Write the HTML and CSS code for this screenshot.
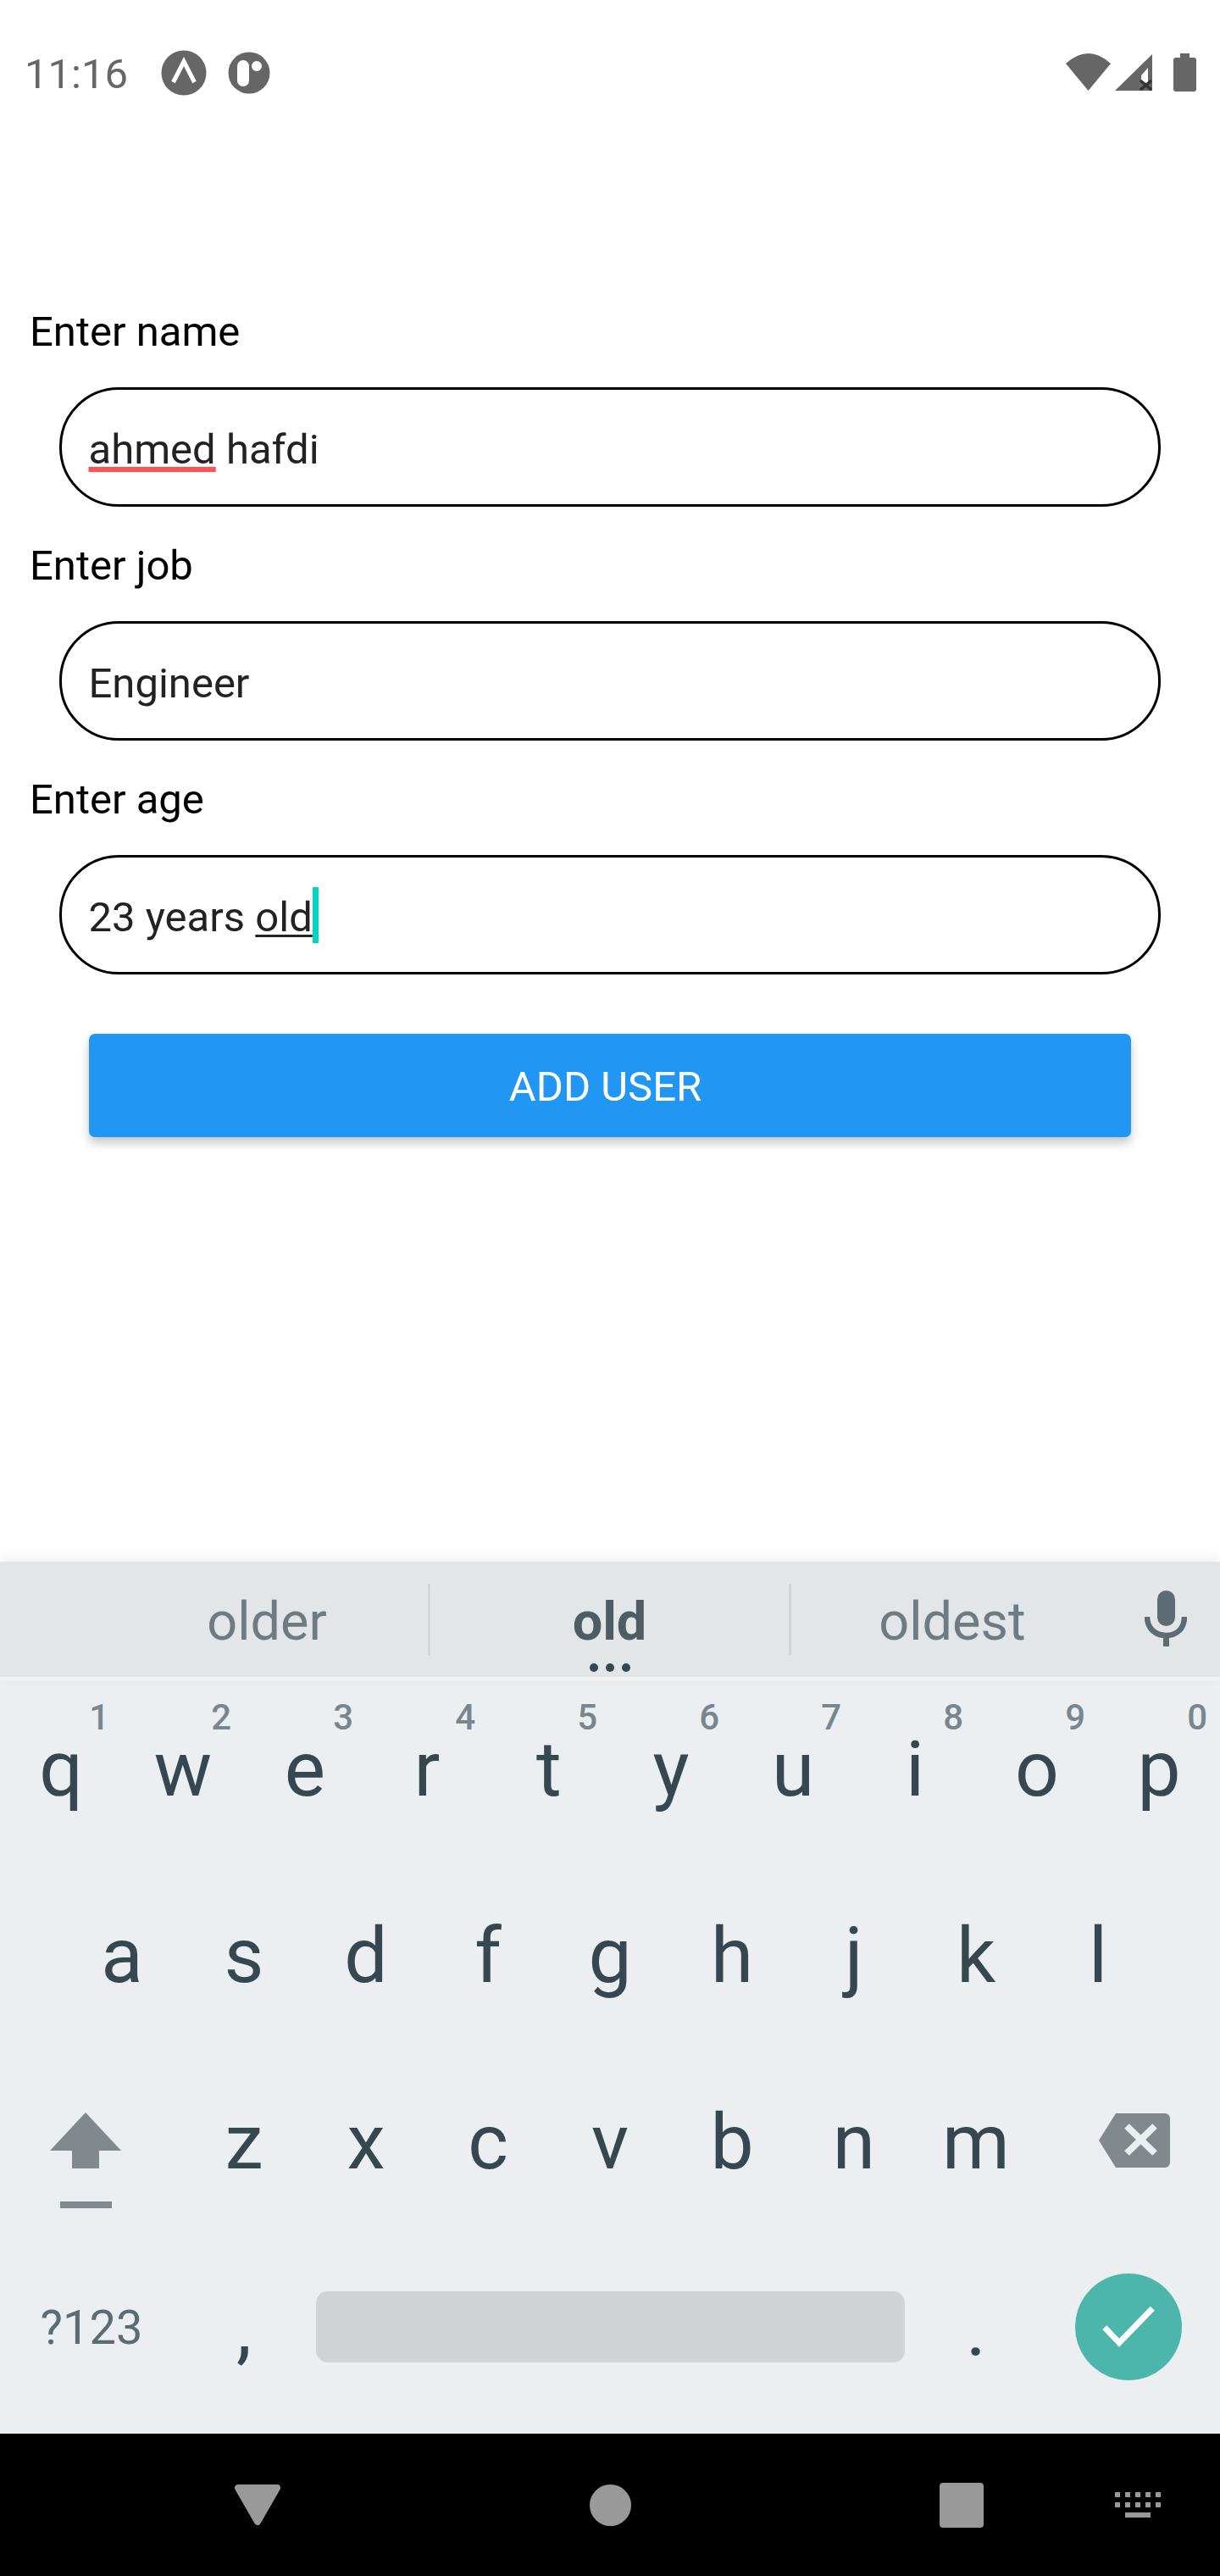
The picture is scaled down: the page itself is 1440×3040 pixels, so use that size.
FILE: index.html
```html
<!DOCTYPE html>
<html lang="en">
<head>
    <meta charset="UTF-8">
    <title>Add user</title>
    <link rel="stylesheet" href="styles.css">
</head>
<body>

<div class="status">
    <span class="time">11:16</span>
    <svg class="app-icon first" width="54" height="54" viewBox="0 0 54 54">
        <circle cx="27" cy="27" r="26.5" fill="#666"/>
        <path d="M14.5 38 L27 13.5 L39.5 38" fill="none" stroke="#fff" stroke-width="5"/>
    </svg>
    <svg class="app-icon" width="54" height="54" viewBox="0 0 54 54">
        <circle cx="27" cy="27" r="24.5" fill="#666"/>
        <rect x="13" y="12" width="14" height="31" rx="7" fill="#fff"/>
        <circle cx="36" cy="19" r="6" fill="#fff"/>
    </svg>
    <div class="status-right">
        <svg class="wifi" width="53" height="45" viewBox="0 0 53 45">
            <path d="M0 12 Q26.5 -12 53 12 L26.5 44 Z" fill="#666"/>
        </svg>
        <svg class="signal" width="44" height="45" viewBox="0 0 44 45">
            <path d="M0 44 L44 1 L44 44 Z" fill="#666"/>
            <path d="M31 26 L39 17 L39 35 L35 38 L31 34 Z" fill="#fff"/>
            <path d="M30 32 L43 43 M43 32 L30 43" stroke="#333" stroke-width="3.5"/>
        </svg>
        <svg class="battery" width="27" height="45" viewBox="0 0 27 45">
            <path d="M8 0 H19 V5 H24 a3 3 0 0 1 3 3 V42 a3 3 0 0 1 -3 3 H3 a3 3 0 0 1 -3 -3 V8 a3 3 0 0 1 3 -3 H8 Z" fill="#666"/>
        </svg>
    </div>
</div>

<div class="form">
    <div class="label">Enter name</div>
    <div class="input"><span class="misspelled">ahmed</span> hafdi</div>

    <div class="label">Enter job</div>
    <div class="input">Engineer</div>

    <div class="label">Enter age</div>
    <div class="input">23 years <span class="composing">old</span></div>

    <div class="button">ADD USER</div>
</div>

<div class="keyboard">
    <div class="suggestions">
        <div class="word">older</div>
        <div class="word current">old<span class="more"><i></i><i></i><i></i></span></div>
        <div class="word">oldest</div>
        <svg class="mic" width="50" height="66" viewBox="0 0 50 66">
            <rect x="15" y="0" width="21" height="42" rx="10.5" fill="#5f6b73"/>
            <path d="M3 31 C3 45 13 53 25.5 53 C38 53 47 45 47 31" fill="none" stroke="#5f6b73" stroke-width="6.5"/>
            <rect x="22" y="52" width="7" height="14" fill="#5f6b73"/>
        </svg>
    </div>

    <div class="row">
        <div class="key">q<span class="hint">1</span></div>
        <div class="key">w<span class="hint">2</span></div>
        <div class="key">e<span class="hint">3</span></div>
        <div class="key">r<span class="hint">4</span></div>
        <div class="key">t<span class="hint">5</span></div>
        <div class="key">y<span class="hint">6</span></div>
        <div class="key">u<span class="hint">7</span></div>
        <div class="key">i<span class="hint">8</span></div>
        <div class="key">o<span class="hint">9</span></div>
        <div class="key">p<span class="hint">0</span></div>
    </div>
    <div class="row center">
        <div class="key">a</div>
        <div class="key">s</div>
        <div class="key">d</div>
        <div class="key">f</div>
        <div class="key">g</div>
        <div class="key">h</div>
        <div class="key">j</div>
        <div class="key">k</div>
        <div class="key">l</div>
    </div>
    <div class="row">
        <div class="key wide shift">
            <svg width="84" height="113" viewBox="0 0 84 113">
                <path d="M42 0 L84 45 H58 V66 H26 V45 H0 Z" fill="#81898d"/>
                <rect x="12" y="105" width="61" height="8" fill="#81898d"/>
            </svg>
        </div>
        <div class="key">z</div>
        <div class="key">x</div>
        <div class="key">c</div>
        <div class="key">v</div>
        <div class="key">b</div>
        <div class="key">n</div>
        <div class="key">m</div>
        <div class="key wide del">
            <svg width="84" height="64" viewBox="0 0 84 64">
                <path d="M20 0 H78 a6 6 0 0 1 6 6 V58 a6 6 0 0 1 -6 6 H20 L0 32 Z" fill="#81898d"/>
                <path d="M33 15 L66 47 M66 15 L33 47" stroke="#eceff1" stroke-width="8"/>
            </svg>
        </div>
    </div>
    <div class="row">
        <div class="key wide symbols">?123</div>
        <div class="key">,</div>
        <div class="space-key"><div class="space-bar"></div></div>
        <div class="key">.</div>
        <div class="key wide">
            <div class="enter">
                <svg width="70" height="52" viewBox="0 0 70 52">
                    <path d="M6.8 26.7 L24 44.7 L63.3 4.3" fill="none" stroke="#fff" stroke-width="7"/>
                </svg>
            </div>
        </div>
    </div>
</div>

<div class="nav">
    <svg class="nav-back" width="56" height="50" viewBox="0 0 56 50">
        <path d="M5 5 H51 L28 45 Z" fill="#999" stroke="#999" stroke-width="8" stroke-linejoin="round"/>
    </svg>
    <div class="nav-home"></div>
    <div class="nav-recent"></div>
    <svg class="nav-ime" width="54" height="30" viewBox="0 0 54 30">
        <g fill="#999">
            <rect x="0" y="0" width="6" height="6"/><rect x="12" y="0" width="6" height="6"/><rect x="24" y="0" width="6" height="6"/><rect x="36" y="0" width="6" height="6"/><rect x="48" y="0" width="6" height="6"/>
            <rect x="0" y="12" width="6" height="6"/><rect x="12" y="12" width="6" height="6"/><rect x="24" y="12" width="6" height="6"/><rect x="36" y="12" width="6" height="6"/><rect x="48" y="12" width="6" height="6"/>
            <rect x="12" y="24" width="30" height="6"/>
        </g>
    </svg>
</div>

</body>
</html>
```
FILE: styles.css
```css
* {
    margin: 0;
    box-sizing: border-box;
}

body {
    font-family: Roboto, "Noto Sans", sans-serif;
    width: 1440px;
    height: 3040px;
    background: #fff;
    display: flex;
    flex-direction: column;
    overflow: hidden;
}

/* status bar */
.status {
    height: 172px;
    padding: 59px 28px 0 29px;
    display: flex;
    align-items: flex-start;
    flex-shrink: 0;
}

.time {
    font-size: 49px;
    line-height: 57px;
    color: #666;
}

.app-icon {
    margin-left: 23px;
}

.app-icon.first {
    margin-left: 39px;
}

.status-right {
    margin-left: auto;
    margin-top: 4px;
    display: flex;
}

.signal {
    margin-left: 5px;
}

.battery {
    margin-left: 25px;
}

/* form */
.form {
    flex: 1;
    padding: 191px 0 0 35px;
}

.label {
    font-size: 49px;
    line-height: 57px;
    color: #000;
}

.input {
    width: 1300px;
    height: 141px;
    margin: 37px 0 41px 35px;
    padding: 5px 35px 0 31.5px;
    border: 3.5px solid #000;
    border-radius: 70px;
    display: flex;
    align-items: center;
    font-size: 49px;
    color: #222;
    white-space: pre;
}

.misspelled {
    text-decoration: underline;
    text-decoration-color: #ff5252;
    text-decoration-thickness: 6px;
    text-underline-offset: 4px;
    text-decoration-skip-ink: none;
}

.composing {
    position: relative;
    text-decoration: underline;
    text-decoration-thickness: 3px;
    text-underline-offset: 4px;
    text-decoration-skip-ink: none;
}

.composing::after {
    content: "";
    position: absolute;
    left: 100%;
    top: -7px;
    width: 7px;
    height: 66px;
    background: #00d5bd;
}

.button {
    width: 1230px;
    height: 122px;
    margin: 70px 0 0 70px;
    padding-right: 11px;
    background: #2196f3;
    border-radius: 7px;
    box-shadow: 0 7px 12px rgba(0, 0, 0, 0.22);
    color: #fff;
    font-size: 49px;
    line-height: 125px;
    text-align: center;
}

/* keyboard */
.keyboard {
    background: #eceff1;
    padding-bottom: 9px;
    flex-shrink: 0;
}

.suggestions {
    height: 140px;
    padding-left: 125px;
    background: #e3e6e9;
    border-bottom: 4px solid #f1f3f5;
    box-shadow: 0 -5px 14px rgba(0, 0, 0, 0.06);
    display: flex;
    align-items: center;
    position: relative;
}

.word {
    width: 380px;
    height: 84px;
    font-size: 63px;
    line-height: 90px;
    color: #6f7b82;
    text-align: center;
}

.word.current {
    width: 429px;
    border-left: 3.5px solid #d0d5d8;
    border-right: 3.5px solid #d0d5d8;
    font-weight: 700;
    color: #4f5c64;
    position: relative;
}

.more {
    position: absolute;
    left: 0;
    right: 0;
    top: 94px;
    display: flex;
    justify-content: center;
    gap: 9px;
}

.more i {
    width: 10px;
    height: 10px;
    border-radius: 50%;
    background: #37474f;
}

.mic {
    position: absolute;
    left: 1351px;
    top: 34px;
}

.row {
    height: 220px;
    display: flex;
    align-items: flex-start;
}

.row.center {
    justify-content: center;
}

.key {
    width: 144px;
    height: 210px;
    font-size: 91px;
    line-height: 210px;
    color: #37474f;
    text-align: center;
    position: relative;
    display: flex;
    justify-content: center;
}

.key.wide {
    width: 216px;
}

.hint {
    position: absolute;
    top: 23px;
    right: 15px;
    font-size: 42px;
    line-height: 42px;
    font-weight: 500;
    color: #78868d;
}

.shift {
    padding: 70px 14px 0 0;
}

.del {
    padding: 71px 0 0 14px;
}

.symbols {
    font-size: 56px;
    line-height: 208px;
    color: #5d6b72;
}

.space-key {
    width: 720px;
    padding: 61px 12px 0 13px;
}

.space-bar {
    height: 84px;
    border-radius: 14px;
    background: #d0d4d7;
}

.enter {
    width: 126px;
    height: 126px;
    margin-top: 40px;
    border-radius: 50%;
    background: #4db6ac;
    display: flex;
    align-items: center;
    justify-content: center;
}

/* navigation bar */
.nav {
    height: 168px;
    padding-left: 276px;
    background: #000;
    display: flex;
    align-items: center;
    flex-shrink: 0;
}

.nav-home {
    width: 49px;
    height: 49px;
    margin-left: 364px;
    border-radius: 50%;
    background: #999;
}

.nav-recent {
    width: 52px;
    height: 53px;
    margin-left: 364px;
    border-radius: 4px;
    background: #999;
}

.nav-ime {
    margin-left: 155px;
}
```
